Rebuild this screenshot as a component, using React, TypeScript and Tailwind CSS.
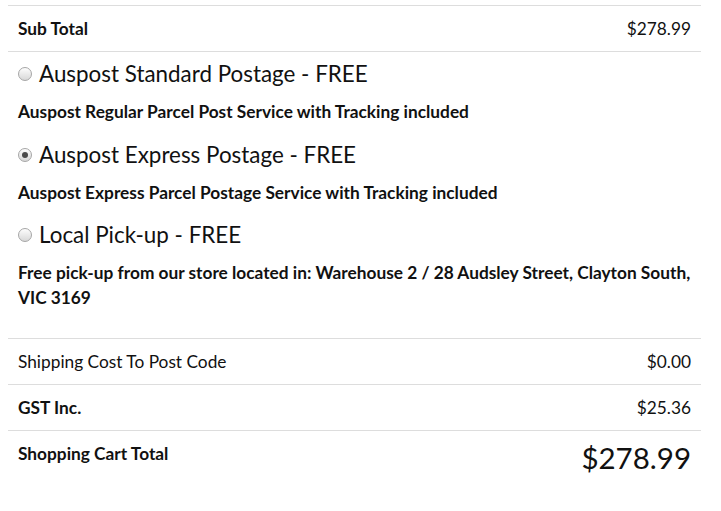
type ShippingOption = {
  id: string
  label: string
  description: string
  checked?: boolean
}

const options: ShippingOption[] = [
  {
    id: "standard",
    label: "Auspost Standard Postage - FREE",
    description: "Auspost Regular Parcel Post Service with Tracking included"
  },
  {
    id: "express",
    label: "Auspost Express Postage - FREE",
    description: "Auspost Express Parcel Postage Service with Tracking included",
    checked: true
  },
  {
    id: "pickup",
    label: "Local Pick-up - FREE",
    description:
      "Free pick-up from our store located in: Warehouse 2 / 28 Audsley Street, Clayton South, VIC 3169"
  }
]

const Radio = ({ checked }: { checked?: boolean }) => (
  <span className="w-[14px] h-[14px] rounded-full border border-[#a6a6a6] bg-gradient-to-b from-[#fdfdfd] to-[#d8d8d8] flex items-center justify-center shrink-0">
    {checked && <span className="w-[6px] h-[6px] rounded-full bg-[#4a4a4a]" />}
  </span>
)

const Row = ({
  label,
  value,
  bold,
  big
}: {
  label: string
  value: string
  bold?: boolean
  big?: boolean
}) => (
  <div className="flex items-start justify-between border-t border-[#dddddd] px-[10px] py-[10px]">
    <span className={`text-[17.3px] leading-[25px] ${bold ? "font-bold" : "font-normal"}`}>
      {label}
    </span>
    <span className={big ? "text-[29.5px] leading-[33px]" : "text-[17.3px] leading-[25px]"}>
      {value}
    </span>
  </div>
)

export default function App() {
  return (
    <div className="bg-white min-h-[511px] pt-[5px] px-[8px] text-[#111] font-['Lato',sans-serif]">
      <div className="w-[693px]">
        <Row label="Sub Total" value="$278.99" bold />

        <div className="border-t border-[#dddddd] px-[10px] pt-[10px] pb-[9px]">
          {options.map((o) => (
            <div key={o.id} className="mb-[18.5px]">
              <label className="flex items-center gap-[7px] h-6">
                <Radio checked={o.checked} />
                <span className="text-[22.4px] leading-6">{o.label}</span>
              </label>
              <p className="mt-[13px] text-[17.3px] font-bold leading-[25px]">
                {o.description}
              </p>
            </div>
          ))}
        </div>

        <Row label="Shipping Cost To Post Code" value="$0.00" />
        <Row label="GST Inc." value="$25.36" bold />
        <Row label="Shopping Cart Total" value="$278.99" bold big />
      </div>
    </div>
  )
}
